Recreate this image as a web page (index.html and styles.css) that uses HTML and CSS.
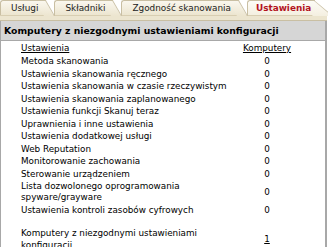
FILE: index.html
```html
<!DOCTYPE html>
<html lang="pl">
<head>
  <meta charset="UTF-8" />
  <title>Ustawienia</title>
  <link rel="stylesheet" href="styles.css">
</head>
<body>
  <div class="panel">
    <ul class="tabs">
      <li class="tab"><span>Usługi</span></li>
      <li class="tab"><span>Składniki</span></li>
      <li class="tab"><span>Zgodność skanowania</span></li>
      <li class="tab active"><span>Ustawienia</span></li>
    </ul>
    <div class="tab-rule"></div>

    <div class="box">
      <div class="box-title">Komputery z niezgodnymi ustawieniami konfiguracji</div>
      <table class="grid">
        <colgroup>
          <col class="col-name">
          <col>
        </colgroup>
        <thead>
          <tr>
            <th class="name"><a href="#">Ustawienia</a></th>
            <th class="count"><a href="#">Komputery</a></th>
          </tr>
        </thead>
        <tbody>
          <tr><td class="name">Metoda skanowania</td><td class="count">0</td></tr>
          <tr><td class="name">Ustawienia skanowania ręcznego</td><td class="count">0</td></tr>
          <tr><td class="name">Ustawienia skanowania w czasie rzeczywistym</td><td class="count">0</td></tr>
          <tr><td class="name">Ustawienia skanowania zaplanowanego</td><td class="count">0</td></tr>
          <tr><td class="name">Ustawienia funkcji Skanuj teraz</td><td class="count">0</td></tr>
          <tr><td class="name">Uprawnienia i inne ustawienia</td><td class="count">0</td></tr>
          <tr><td class="name">Ustawienia dodatkowej usługi</td><td class="count">0</td></tr>
          <tr><td class="name">Web Reputation</td><td class="count">0</td></tr>
          <tr><td class="name">Monitorowanie zachowania</td><td class="count">0</td></tr>
          <tr><td class="name">Sterowanie urządzeniem</td><td class="count">0</td></tr>
          <tr class="tall"><td class="name">Lista dozwolonego oprogramowania<br>spyware/grayware</td><td class="count">0</td></tr>
          <tr class="tall"><td class="name">Ustawienia kontroli zasobów cyfrowych</td><td class="count">0</td></tr>
          <tr class="spacer"><td colspan="2"></td></tr>
          <tr class="total"><td class="name">Komputery z niezgodnymi ustawieniami<br>konfiguracji</td><td class="count"><a href="#">1</a></td></tr>
        </tbody>
      </table>
    </div>
  </div>
</body>
</html>
```

FILE: styles.css
```css
body {
  margin: 0;
  background: #ffffff;
  font-family: "DejaVu Sans", Verdana, sans-serif;
  font-size: 8.8px;
  color: #000;
}

.panel {
  width: 327px;
}

/* tabs */
.tabs {
  list-style: none;
  margin: 0;
  padding: 0;
  display: flex;
  align-items: flex-end;
  height: 15px;
}

.tab {
  position: relative;
  height: 14px;
  line-height: 14px;
  padding: 0 8px 0 10px;
  margin-right: 8px;
  font-size: 8.9px;
  white-space: nowrap;
  color: #222;
  background: linear-gradient(to bottom, #faf7ee, #ece5cf);
  border-top: 1px solid #c9bfa3;
  border-left: 1px solid #c9bfa3;
  border-radius: 3px 0 0 0;
}

.tab span {
  position: relative;
  z-index: 2;
}

.tab::after {
  content: "";
  position: absolute;
  top: -1px;
  right: -9px;
  width: 10px;
  height: 15px;
  background: linear-gradient(to bottom, #faf7ee, #ece5cf);
  border-top: 1px solid #c9bfa3;
  border-right: 1px solid #c9bfa3;
  transform: skewX(30deg);
  transform-origin: bottom left;
  z-index: 1;
}

.tab.active {
  margin-left: 0;
  padding: 0 4px 0 8px;
  color: #b3141e;
  font-weight: bold;
  background: linear-gradient(to bottom, #fdfcf7, #f4efe0);
}

.tab.active::after {
  right: -18px;
  width: 19px;
  transform: skewX(50deg);
  background: linear-gradient(to bottom, #fdfcf7, #f4efe0);
}

.tab-rule {
  height: 4px;
  background: #ece5cf;
  border-top: 1px solid #d8ceb2;
  border-bottom: 1px solid #c9bfa3;
}

/* report box */
.box {
  border-left: 1px solid #a8a8a8;
  border-right: 2px solid #a8a8a8;
  padding-bottom: 4px;
}

.box-title {
  background: #d6d6d6;
  border-bottom: 1px solid #a8a8a8;
  font-size: 9.3px;
  font-weight: bold;
  padding: 0 3px;
  height: 19px;
  line-height: 19px;
  white-space: nowrap;
}

.grid {
  border-collapse: collapse;
  table-layout: fixed;
  width: 100%;
  margin-top: 1px;
}

.col-name {
  width: 208px;
}

.grid th,
.grid td {
  padding: 0;
  font-weight: normal;
  line-height: 12.5px;
  vertical-align: middle;
  white-space: nowrap;
}

.grid a {
  color: #000;
}

.grid .name {
  text-align: left;
  padding-left: 20px;
}

.grid .count {
  text-align: center;
}

.grid th {
  height: 13px;
}

.grid .tall td {
  padding-top: 1px;
  padding-bottom: 1px;
  line-height: 11px;
}

.grid .spacer td {
  height: 10px;
}

.grid .total td {
  line-height: 12px;
}
```
